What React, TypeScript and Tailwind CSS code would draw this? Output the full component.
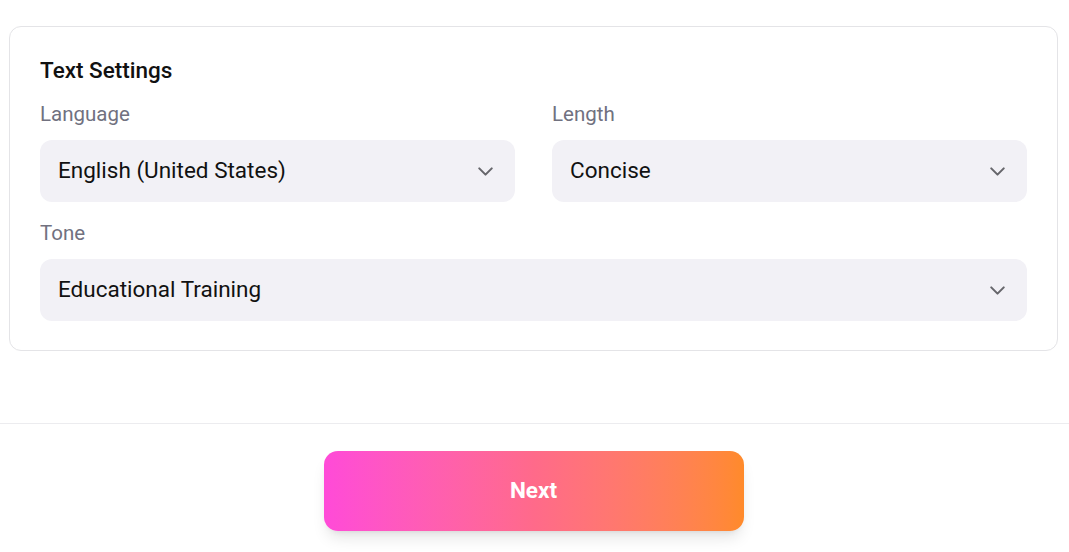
import React from 'react';
import { ChevronDown } from 'lucide-react';

interface SelectFieldProps {
  label: string;
  value: string;
}

const SelectField: React.FC<SelectFieldProps> = ({ label, value }) => (
  <div className="flex flex-col">
    <label className="text-[20.5px] leading-[26px] text-[#71717f] mb-[13px]">{label}</label>
    <div className="h-[62px] rounded-[12px] bg-[#f2f1f6] flex items-center justify-between pl-[18px] pr-[17px]">
      <span className="text-[22.5px] text-[#111111]">{value}</span>
      <ChevronDown className="h-[25px] w-[25px] text-[#66666b]" strokeWidth={2} />
    </div>
  </div>
);

const App: React.FC = () => {
  return (
    <div className="w-[1069px] h-[552px] bg-white overflow-hidden" style={{ fontFamily: 'Roboto, "Liberation Sans", sans-serif' }}>
      <div className="pl-[9px] pt-[26px] pr-[11px]">
        <div className="rounded-[12px] border border-[#e4e4e7] px-[30px] pt-[28px] pb-[29px]">
          <h2 className="text-[22.5px] leading-[30px] font-medium text-[#111111] mb-[16px]">Text Settings</h2>
          <div className="grid grid-cols-2 gap-x-[37px]">
            <SelectField label="Language" value="English (United States)" />
            <SelectField label="Length" value="Concise" />
          </div>
          <div className="mt-[18px]">
            <SelectField label="Tone" value="Educational Training" />
          </div>
        </div>
      </div>

      <div className="mt-[72px] border-t border-[#ececef]" />

      <div className="flex justify-center pt-[27px] pr-[2px]">
        <button className="w-[420px] h-[80px] rounded-[14px] bg-gradient-to-r from-[#ff4ad8] via-[#ff6a8a] to-[#ff8a2a] text-white text-[22.5px] font-bold shadow-lg shadow-black/10">
          Next
        </button>
      </div>
    </div>
  );
};

export default App;
